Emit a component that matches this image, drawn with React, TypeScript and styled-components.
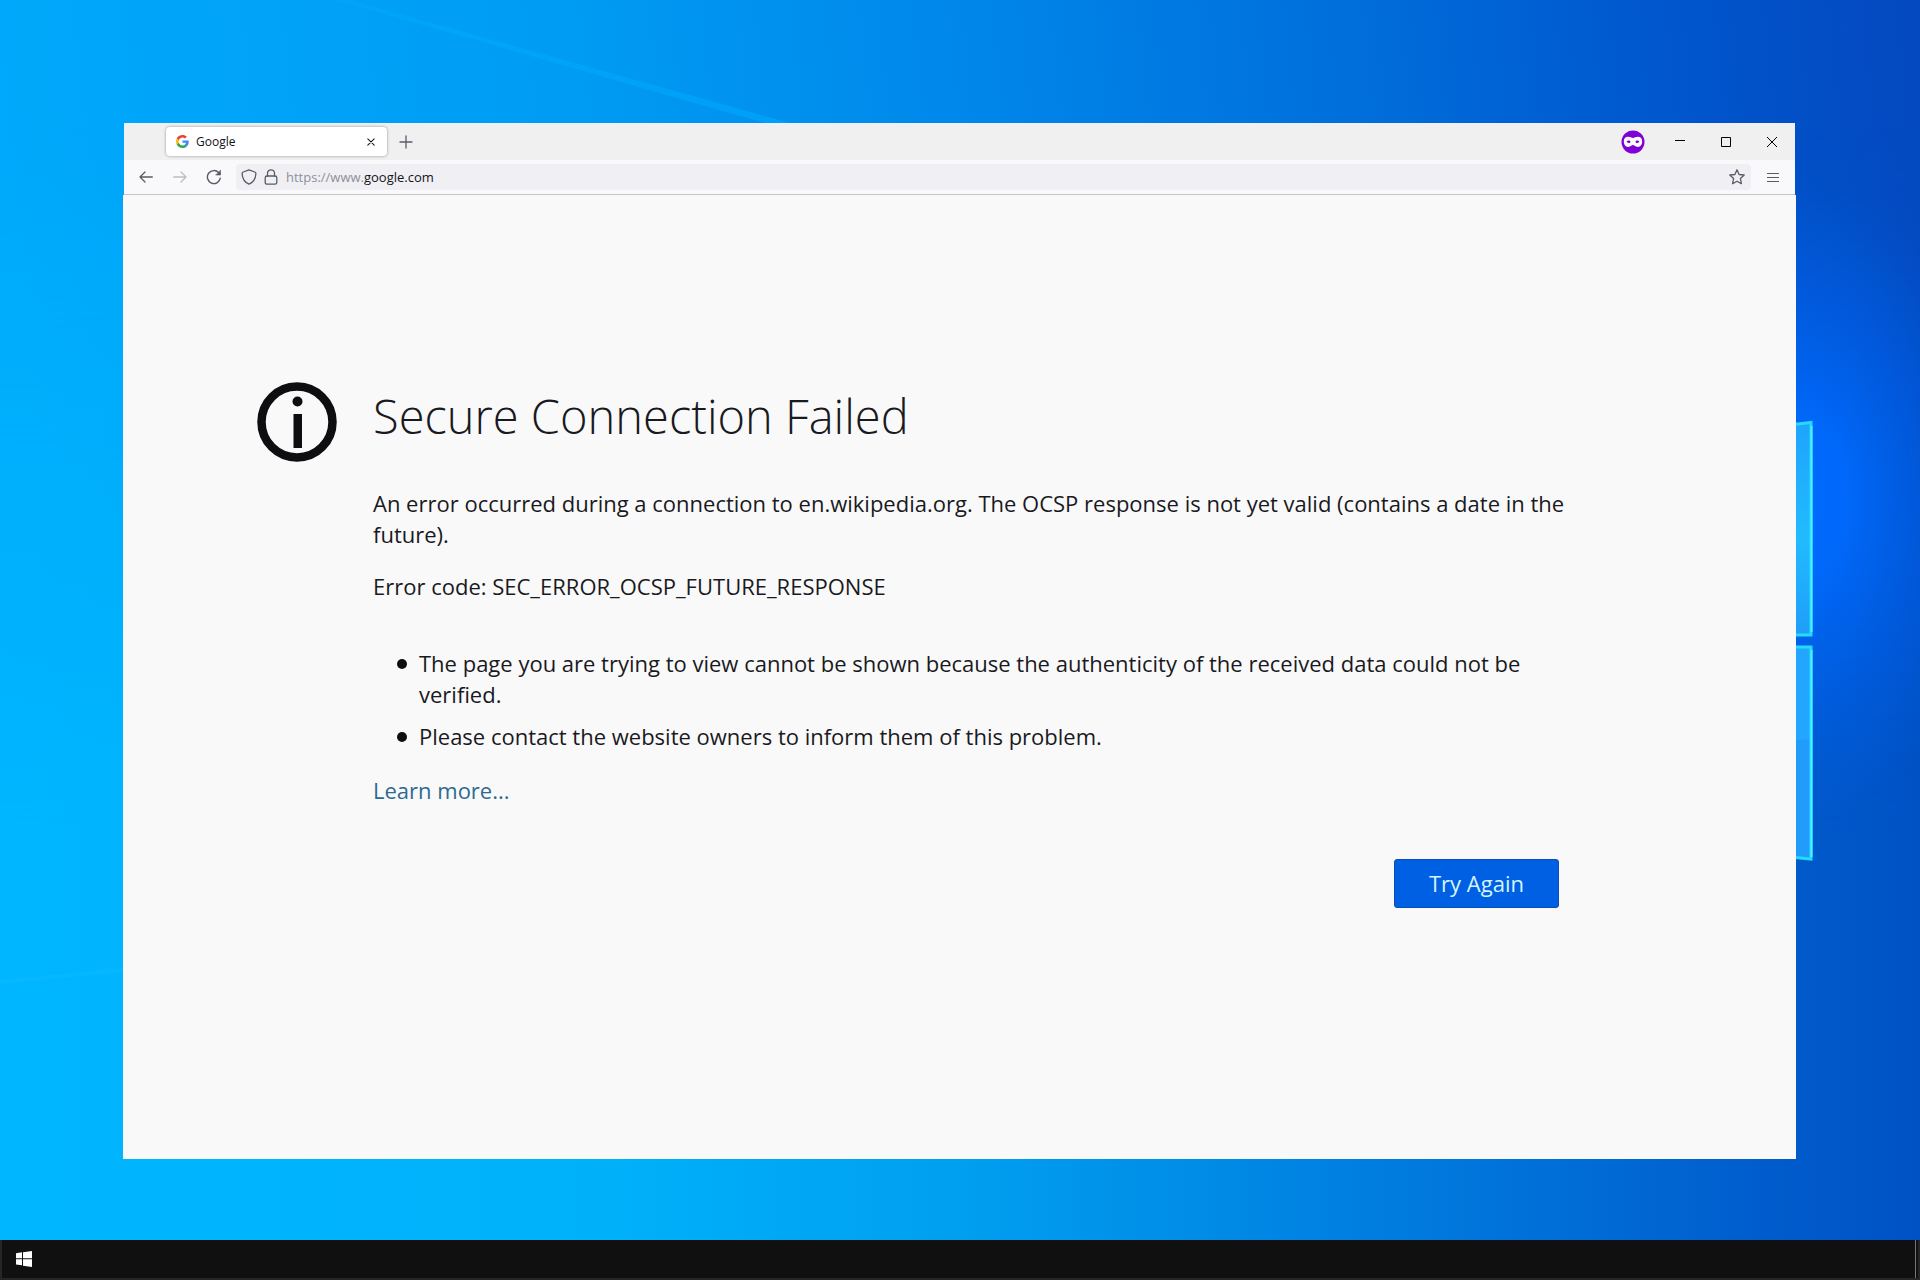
import React from "react";
import styled, { createGlobalStyle } from "styled-components";

const Global = createGlobalStyle`
  *, *::before, *::after { box-sizing: border-box; }
  body { margin: 0; background: #0090ee; }
  button, input { font: inherit; }
`;

const Desktop = styled.div`
  position: relative;
  display: flex;
  flex-direction: column;
  min-height: 100vh;
  overflow: hidden;
  font-family: "Open Sans", "Noto Sans", sans-serif;
`;

const Wallpaper = styled.svg`
  position: absolute;
  inset: 0;
  width: 100%;
  height: 100%;
`;

const Workspace = styled.main`
  position: relative;
  flex: 1;
  display: flex;
  padding: 123px 124px 81px 123px;
`;

const BrowserWindow = styled.section`
  flex: 1;
  display: flex;
  flex-direction: column;
  min-width: 0;
`;

const Chrome = styled.header`
  margin: 0 1px;
  background: #f9f9fb;
  border-bottom: 1px solid #c6c6ca;
`;

const TabStrip = styled.div`
  display: flex;
  align-items: center;
  height: 37px;
  padding-left: 42px;
  background: #f0f0f0;
`;

const Tab = styled.div`
  display: flex;
  align-items: center;
  gap: 7px;
  width: 221px;
  height: 29px;
  padding: 0 4px 0 10px;
  border-radius: 4px;
  background: #fff;
  box-shadow: 0 0 3px rgba(0, 0, 0, 0.4);
  font-size: 12px;
  color: #15141a;
`;

const TabTitle = styled.span`
  flex: 1;
`;

const IconButton = styled.button<{ $w?: number }>`
  display: flex;
  align-items: center;
  justify-content: center;
  flex: none;
  width: ${(p) => p.$w ?? 24}px;
  height: 24px;
  padding: 0;
  border: 0;
  background: transparent;
  color: #5b5b66;
  &:disabled { color: #bdbdc2; }
`;

const PrivateBadge = styled.svg`
  margin: 0 12px 0 auto;
`;

const CaptionButton = styled(IconButton)`
  width: 46px;
  height: 37px;
  color: #000;
`;

const Toolbar = styled.nav`
  display: flex;
  align-items: center;
  height: 34px;
  padding-left: 10px;
`;

const NavGroup = styled.div`
  display: flex;
  gap: 10px;
  margin-right: 10px;
`;

const AddressBar = styled.div`
  flex: 1;
  display: flex;
  align-items: center;
  height: 26px;
  padding: 0 2px 0 1px;
  border-radius: 4px;
  background: #f0f0f4;
  font-size: 13px;
`;

const Address = styled.a`
  flex: 1;
  padding-left: 5px;
  color: #8f8f98;
  text-decoration: none;
  strong { font-weight: 400; color: #15141a; }
`;

const Page = styled.div`
  flex: 1;
  padding: 187px 228px 40px 134px;
  background: #f9f9fa;
  color: #1a1a1e;
`;

const ErrorPanel = styled.article`
  display: grid;
  grid-template-columns: 80px minmax(0, 1fr);
  column-gap: 36px;
`;

const Title = styled.h1`
  margin: 0;
  font-size: 47px;
  font-weight: 300;
  line-height: 68px;
`;

const Body = styled.div`
  grid-column: 2;
  padding-top: 26px;
  font-size: 22px;
  line-height: 31px;
`;

const Paragraph = styled.p`
  margin: 0 0 21px;
`;

const Reasons = styled.ul`
  margin: 46px 0 23px;
  padding-left: 24px;
  list-style: none;
`;

const Reason = styled.li`
  display: flex;
  gap: 12px;
  margin-bottom: 11px;
  &::before {
    content: "";
    flex: none;
    width: 10px;
    height: 10px;
    margin-top: 11px;
    border-radius: 50%;
    background: #0e0e10;
  }
`;

const LearnMore = styled.a`
  color: #2d6a92;
  text-decoration: none;
`;

const Actions = styled.div`
  display: flex;
  justify-content: flex-end;
  padding: 53px 9px 0 0;
`;

const PrimaryButton = styled.button`
  width: 165px;
  height: 49px;
  padding: 0;
  border: 1px solid #0a50b4;
  border-radius: 3px;
  background: #0060e3;
  color: #d4f4ff;
`;

const Taskbar = styled.footer`
  position: relative;
  display: flex;
  align-items: center;
  justify-content: space-between;
  height: 40px;
  padding: 0 2px 0 14px;
  background: #101010;
  border: solid #262626;
  border-width: 0 2px 2px;
`;

const ShowDesktop = styled.button`
  width: 1px;
  height: 38px;
  padding: 0;
  border: 0;
  background: #777;
`;

const stroke = { fill: "none", stroke: "currentColor", strokeLinecap: "round", strokeLinejoin: "round" } as const;

function DesktopArt() {
  return (
    <Wallpaper viewBox="0 0 1920 1280" preserveAspectRatio="none" aria-hidden="true">
      <defs>
        <linearGradient id="base" gradientUnits="userSpaceOnUse" x1="0" y1="200" x2="1900" y2="0">
          <stop offset="0" stopColor="#00a9fb" />
          <stop offset="0.3" stopColor="#009cf3" />
          <stop offset="0.5" stopColor="#0088ea" />
          <stop offset="0.7" stopColor="#0070dc" />
          <stop offset="0.87" stopColor="#0057ce" />
          <stop offset="1" stopColor="#0449c0" />
        </linearGradient>
        <linearGradient id="lower" gradientUnits="userSpaceOnUse" x1="0" y1="0" x2="1920" y2="0">
          <stop offset="0" stopColor="#00b6ff" />
          <stop offset="0.3" stopColor="#00b2fa" />
          <stop offset="0.5" stopColor="#009ff0" />
          <stop offset="0.65" stopColor="#0088e5" />
          <stop offset="0.8" stopColor="#0070d8" />
          <stop offset="0.92" stopColor="#005ccc" />
          <stop offset="1" stopColor="#0052c4" />
        </linearGradient>
        <linearGradient id="fade" x1="0" y1="0" x2="0" y2="1">
          <stop offset="0.1" stopColor="#000" />
          <stop offset="0.65" stopColor="#fff" />
        </linearGradient>
        <mask id="fadeMask"><rect width="1920" height="1280" fill="url(#fade)" /></mask>
        <radialGradient id="glow" gradientUnits="userSpaceOnUse" cx="0" cy="0" r="1" gradientTransform="translate(1800 500) scale(190 320)">
          <stop offset="0" stopColor="#006cff" />
          <stop offset="0.25" stopColor="#006aff" stopOpacity="0.9" />
          <stop offset="0.6" stopColor="#0064f4" stopOpacity="0.5" />
          <stop offset="1" stopColor="#0060f0" stopOpacity="0" />
        </radialGradient>
        <linearGradient id="upperPane" x1="0" y1="0" x2="0" y2="1">
          <stop offset="0" stopColor="#1fa4fb" />
          <stop offset="0.55" stopColor="#22bbff" />
          <stop offset="1" stopColor="#1f9df8" />
        </linearGradient>
      </defs>
      <rect width="1920" height="1280" fill="url(#base)" />
      <rect width="1920" height="1280" fill="url(#lower)" mask="url(#fadeMask)" />
      <rect width="1920" height="1280" fill="url(#glow)" />
      <path d="M335 0 L350 0 L790 123 L765 123 Z" fill="#00a8ff" opacity="0.6" />
      <path d="M0 980 L123 968 V972 L0 984 Z" fill="#10bdff" opacity="0.3" />
      <path d="M1780 425 L1812 421.500 V636 H1780 Z" fill="url(#upperPane)" />
      <path d="M1780 646 H1812 V860 L1780 856 Z" fill="#229cfb" />
      <path d="M1780 742 L1812 739 V646 H1780 Z" fill="#22a6ff" />
      <path d="M1780 426 L1811 422.500 V635 H1780 M1780 647 H1811 V859 L1780 856" fill="none" stroke="#25d9ff" strokeWidth="3" />
      <path d="M1811.500 426 V632 M1811.500 650 V857" stroke="#48f4ff" strokeWidth="2" />
    </Wallpaper>
  );
}

const GoogleMark = () => (
  <svg width="13" height="13" viewBox="0 0 48 48" aria-hidden="true">
    <path fill="#EA4335" d="M24 9.500c3.540 0 6.710 1.220 9.210 3.600l6.850-6.850C35.900 2.380 30.470 0 24 0 14.620 0 6.510 5.380 2.560 13.220l7.980 6.190C12.430 13.720 17.740 9.500 24 9.500z" />
    <path fill="#4285F4" d="M46.980 24.550c0-1.570-.15-3.090-.38-4.550H24v9.020h12.940c-.58 2.960-2.260 5.480-4.780 7.180l7.730 6c4.510-4.180 7.090-10.360 7.090-17.650z" />
    <path fill="#FBBC05" d="M10.530 28.590c-.48-1.450-.76-2.990-.76-4.590s.27-3.140.76-4.590l-7.980-6.190C.92 16.460 0 20.120 0 24c0 3.880.92 7.540 2.560 10.780l7.970-6.190z" />
    <path fill="#34A853" d="M24 48c6.480 0 11.930-2.130 15.890-5.810l-7.730-6c-2.150 1.450-4.920 2.300-8.160 2.300-6.260 0-11.570-4.220-13.470-9.910l-7.980 6.190C6.510 42.620 14.620 48 24 48z" />
  </svg>
);

export default function App() {
  return (
    <Desktop>
      <Global />
      <DesktopArt />
      <Workspace>
        <BrowserWindow>
          <Chrome>
            <TabStrip>
              <Tab>
                <GoogleMark />
                <TabTitle>Google</TabTitle>
                <IconButton aria-label="Close tab">
                  <svg width="8" height="8" viewBox="0 0 10 10" {...stroke} stroke="#15141a" strokeWidth="1.300"><path d="M1 1l8 8M9 1L1 9" /></svg>
                </IconButton>
              </Tab>
              <IconButton $w={38} aria-label="New tab">
                <svg width="14" height="14" viewBox="0 0 14 14" {...stroke} strokeWidth="1.300"><path d="M7 1v12M1 7h12" /></svg>
              </IconButton>
              <PrivateBadge width="24" height="24" viewBox="0 0 24 24" role="img" aria-label="Private browsing">
                <circle cx="12" cy="12" r="11.500" fill="#8000d7" />
                <path fillRule="evenodd" fill="#fff" d="M7.200 6.800c2 0 3.400 1.200 4.800 1.200s2.800-1.200 4.800-1.200c2.900 0 4.400 2 4.400 4.800 0 3-1.700 5.400-4.400 5.400-2.200 0-3.600-1.900-4.800-1.900S9.400 17 7.200 17c-2.700 0-4.400-2.400-4.400-5.400 0-2.800 1.500-4.800 4.400-4.800zM7.800 10.400c-1.200 0-2 .7-2.300 1.400.5.700 1.300 1.200 2.200 1.200 1.100 0 1.800-.6 1.800-1.300s-.7-1.300-1.700-1.300zm8.400 0c-1 0-1.700.6-1.700 1.300s.7 1.300 1.800 1.300c.9 0 1.700-.5 2.200-1.200-.3-.7-1.100-1.400-2.300-1.400z" />
              </PrivateBadge>
              <CaptionButton aria-label="Minimize">
                <svg width="10" height="11" viewBox="0 0 10 11" stroke="currentColor"><path d="M0 4.500h10" /></svg>
              </CaptionButton>
              <CaptionButton aria-label="Maximize">
                <svg width="10" height="10" viewBox="0 0 10 10" fill="none" stroke="currentColor"><path d="M.5.5h9v9h-9z" /></svg>
              </CaptionButton>
              <CaptionButton aria-label="Close window">
                <svg width="10" height="10" viewBox="0 0 10 10" stroke="currentColor"><path d="M0 0l10 10M10 0L0 10" /></svg>
              </CaptionButton>
            </TabStrip>
            <Toolbar>
              <NavGroup>
                <IconButton aria-label="Back">
                  <svg width="14" height="12" viewBox="0 0 14 12" {...stroke} strokeWidth="1.300"><path d="M13.300 6H1M6 1L1 6l5 5" /></svg>
                </IconButton>
                <IconButton aria-label="Forward" disabled>
                  <svg width="14" height="12" viewBox="0 0 14 12" {...stroke} strokeWidth="1.300"><path d="M.7 6H13M8 1l5 5-5 5" /></svg>
                </IconButton>
                <IconButton aria-label="Reload">
                  <svg width="16" height="16" viewBox="0 0 16 16" {...stroke} strokeWidth="1.400"><path d="M14.300 9.200A6.500 6.500 0 1 1 12.800 3.800L14 5" /><path d="M14.500 1.500v4.500H10z" fill="currentColor" strokeWidth=".6" /></svg>
                </IconButton>
              </NavGroup>
              <AddressBar>
                <IconButton aria-label="Tracking protection">
                  <svg width="16" height="16" viewBox="0 0 16 16" {...stroke} strokeWidth="1.300"><path d="M8 .8l5.700 2.200c.8.300 1.200.8 1.200 1.600C14.700 9.500 12.400 13.200 8 15.200 3.600 13.200 1.300 9.500 1.100 4.600c0-.8.400-1.300 1.200-1.600z" /></svg>
                </IconButton>
                <IconButton $w={20} aria-label="Site information">
                  <svg width="14" height="16" viewBox="0 0 14 16" {...stroke} strokeWidth="1.300"><rect x="1.200" y="7" width="11.600" height="8.200" rx="1.800" /><path d="M3.500 7V4.300a3.500 3.500 0 0 1 7 0V7" /></svg>
                </IconButton>
                <Address href="https://www.google.com">https://www.<strong>google.com</strong></Address>
                <IconButton aria-label="Bookmark this page">
                  <svg width="16" height="16" viewBox="0 0 16 16" {...stroke} strokeWidth="1.300"><path d="M8 .8l2.100 4.700 5.100.5-3.800 3.500 1 5.200L8 12.200l-4.400 2.500 1-5.200L.8 6l5.100-.5z" /></svg>
                </IconButton>
              </AddressBar>
              <IconButton $w={44} aria-label="Open menu">
                <svg width="12" height="11" viewBox="0 0 12 11" stroke="currentColor"><path d="M0 1.500h12M0 5.500h12M0 9.500h12" /></svg>
              </IconButton>
            </Toolbar>
          </Chrome>
          <Page>
            <ErrorPanel>
              <svg width="80" height="80" viewBox="0 0 80 80" aria-hidden="true">
                <circle cx="40" cy="40" r="35.500" fill="none" stroke="#0e0e10" strokeWidth="8.500" />
                <circle cx="40.500" cy="19.500" r="5" fill="#0e0e10" />
                <path d="M36.500 32H45v34h-8.500z" fill="#0e0e10" />
              </svg>
              <Title>Secure Connection Failed</Title>
              <Body>
                <Paragraph>An error occurred during a connection to en.wikipedia.org. The OCSP response is not yet valid (contains a date in the future).</Paragraph>
                <Paragraph>Error code: SEC_ERROR_OCSP_FUTURE_RESPONSE</Paragraph>
                <Reasons>
                  <Reason>The page you are trying to view cannot be shown because the authenticity of the received data could not be verified.</Reason>
                  <Reason>Please contact the website owners to inform them of this problem.</Reason>
                </Reasons>
                <LearnMore href="#learn-more">Learn more...</LearnMore>
                <Actions><PrimaryButton>Try Again</PrimaryButton></Actions>
              </Body>
            </ErrorPanel>
          </Page>
        </BrowserWindow>
      </Workspace>
      <Taskbar>
        <svg width="16" height="16" viewBox="0 0 16 16" fill="#fff" role="img" aria-label="Start"><path d="M0 2.200L6 1.300V7.300H0zM7 1.200L16 0V7.300H7zM0 8.300h6v6L0 13.500zM7 8.300h9V16l-9-1.200z" /></svg>
        <ShowDesktop aria-label="Show desktop" />
      </Taskbar>
    </Desktop>
  );
}
